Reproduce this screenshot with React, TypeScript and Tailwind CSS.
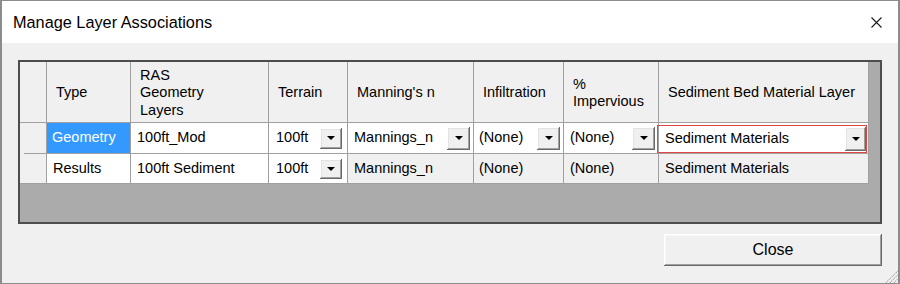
import React from "react";

function DropButton({ size }: { size: string }) {
  return (
    <div
      className={`${size} flex shrink-0 items-center justify-center bg-[#f0f0f0] shadow-[inset_-1px_-1px_0_#696969,inset_1px_1px_0_#ffffff,inset_-2px_-2px_0_#a0a0a0,inset_2px_2px_0_#e3e3e3]`}
    >
      <svg width="8" height="4" viewBox="0 0 8 4">
        <polygon points="0,0 8,0 4,4" fill="#000" />
      </svg>
    </div>
  );
}

function HeaderCell({ w, lines }: { w: string; lines: string[] }) {
  return (
    <div
      className={`${w} flex shrink-0 flex-col justify-center border-b border-r border-[#a0a0a0] pl-[9px] pt-[2px] leading-[17.5px]`}
    >
      {lines.map((l) => (
        <span key={l} className="whitespace-nowrap">
          {l}
        </span>
      ))}
    </div>
  );
}

export default function App() {
  return (
    <div className="flex h-[284px] w-[900px] flex-col border-x-2 border-b border-t border-[#8c8c8c] font-['Liberation_Sans',Arial,sans-serif] text-black">
      {/* Title bar */}
      <div className="flex h-[42px] shrink-0 items-center justify-between bg-white pl-[11px] pr-[16px]">
        <span className="text-[16.3px]">Manage Layer Associations</span>
        <svg width="11" height="11" viewBox="0 0 11 11">
          <path d="M0.5 0.5 L10.5 10.5 M10.5 0.5 L0.5 10.5" stroke="#1a1a1a" strokeWidth="1.1" />
        </svg>
      </div>

      {/* Body */}
      <div className="relative flex flex-1 flex-col bg-[#f0f0f0] px-[16px] pt-[17px]">
        {/* Data grid */}
        <div className="flex h-[164px] flex-col border-2 border-[#4d4d4d] bg-[#ababab] text-[14.5px]">
          {/* Header row */}
          <div className="flex h-[61px] shrink-0">
            <div className="w-[27px] shrink-0 border-b border-r border-[#a0a0a0] bg-[#f0f0f0]" />
            <div className="flex bg-[#f0f0f0]">
              <HeaderCell w="w-[84px]" lines={["Type"]} />
              <HeaderCell w="w-[138px]" lines={["RAS", "Geometry", "Layers"]} />
              <HeaderCell w="w-[79px]" lines={["Terrain"]} />
              <HeaderCell w="w-[126px]" lines={["Manning's n"]} />
              <HeaderCell w="w-[90px]" lines={["Infiltration"]} />
              <HeaderCell w="w-[95px]" lines={["%", "Impervious"]} />
              <HeaderCell w="w-[210px]" lines={["Sediment Bed Material Layer"]} />
            </div>
          </div>

          {/* Row 1 */}
          <div className="flex h-[31px] shrink-0">
            <div className="flex w-[27px] shrink-0 flex-col justify-end border-r border-[#a0a0a0] bg-[#f0f0f0]">
              <div className="ml-[4px] h-px bg-[#a0a0a0]" />
            </div>
            <div className="flex w-[84px] shrink-0 items-center border-b border-r border-[#a0a0a0] bg-[#3399ff] pl-[5px] text-white">
              Geometry
            </div>
            <div className="flex w-[138px] shrink-0 items-center border-b border-r border-[#a0a0a0] bg-white pl-[6px]">
              100ft_Mod
            </div>
            <div className="flex w-[79px] shrink-0 items-center justify-between border-b border-r border-[#a0a0a0] bg-white pl-[7px] pr-[5px]">
              <span>100ft</span>
              <DropButton size="h-[21px] w-[22px]" />
            </div>
            <div className="flex w-[126px] shrink-0 items-center justify-between border-b border-r border-[#a0a0a0] bg-white pl-[6px] pr-[3px]">
              <span>Mannings_n</span>
              <DropButton size="h-[23px] w-[23px]" />
            </div>
            <div className="flex w-[90px] shrink-0 items-center justify-between border-b border-r border-[#a0a0a0] bg-white pl-[5px] pr-[3px]">
              <span>(None)</span>
              <DropButton size="h-[23px] w-[23px]" />
            </div>
            <div className="flex w-[95px] shrink-0 items-center justify-between border-b border-r border-[#a0a0a0] bg-white pl-[6px] pr-[3px]">
              <span>(None)</span>
              <DropButton size="h-[23px] w-[23px]" />
            </div>
            <div className="flex w-[210px] shrink-0 border-b border-r border-[#a0a0a0] bg-white pt-[2px] pr-[1px]">
              <div className="-ml-[2px] flex flex-1 items-center justify-between border border-[#e04646] pl-[7px]">
                <span>Sediment Materials</span>
                <DropButton size="h-[24px] w-[21px]" />
              </div>
            </div>
          </div>

          {/* Row 2 */}
          <div className="flex h-[30px] shrink-0">
            <div className="w-[27px] shrink-0 border-b border-r border-[#a0a0a0] bg-[#f0f0f0]" />
            <div className="flex w-[84px] shrink-0 items-center border-b border-r border-[#a0a0a0] bg-white pl-[6px]">
              Results
            </div>
            <div className="flex w-[138px] shrink-0 items-center border-b border-r border-[#a0a0a0] bg-white pl-[6px]">
              100ft Sediment
            </div>
            <div className="flex w-[79px] shrink-0 items-center justify-between border-b border-r border-[#a0a0a0] bg-white pl-[7px] pr-[5px]">
              <span>100ft</span>
              <DropButton size="h-[20px] w-[22px]" />
            </div>
            <div className="flex w-[126px] shrink-0 items-center border-b border-r border-[#a0a0a0] bg-[#f0f0f0] pl-[6px]">
              Mannings_n
            </div>
            <div className="flex w-[90px] shrink-0 items-center border-b border-r border-[#a0a0a0] bg-[#f0f0f0] pl-[5px]">
              (None)
            </div>
            <div className="flex w-[95px] shrink-0 items-center border-b border-r border-[#a0a0a0] bg-[#f0f0f0] pl-[6px]">
              (None)
            </div>
            <div className="flex w-[210px] shrink-0 items-center border-b border-r border-[#a0a0a0] bg-[#f0f0f0] pl-[6px]">
              Sediment Materials
            </div>
          </div>
        </div>

        {/* Footer */}
        <div className="mt-[10px] flex justify-end">
          <button className="flex h-[32px] w-[218px] items-center justify-center bg-[#f0f0f0] text-[16px] shadow-[inset_-1px_-1px_0_#696969,inset_1px_1px_0_#ffffff,inset_-2px_-2px_0_#a0a0a0,inset_2px_2px_0_#f8f8f8]">
            Close
          </button>
        </div>

        {/* Size grip */}
        <svg className="absolute bottom-0 right-0" width="15" height="15" viewBox="0 0 15 15">
          <path d="M3 15 L15 3 M7 15 L15 7 M11 15 L15 11" stroke="#a0a0a0" strokeWidth="1.2" strokeDasharray="1.2 0.8" />
          <path d="M4 15 L15 4 M8 15 L15 8 M12 15 L15 12" stroke="#ffffff" strokeWidth="1" strokeDasharray="1.2 0.8" />
        </svg>
      </div>
    </div>
  );
}
